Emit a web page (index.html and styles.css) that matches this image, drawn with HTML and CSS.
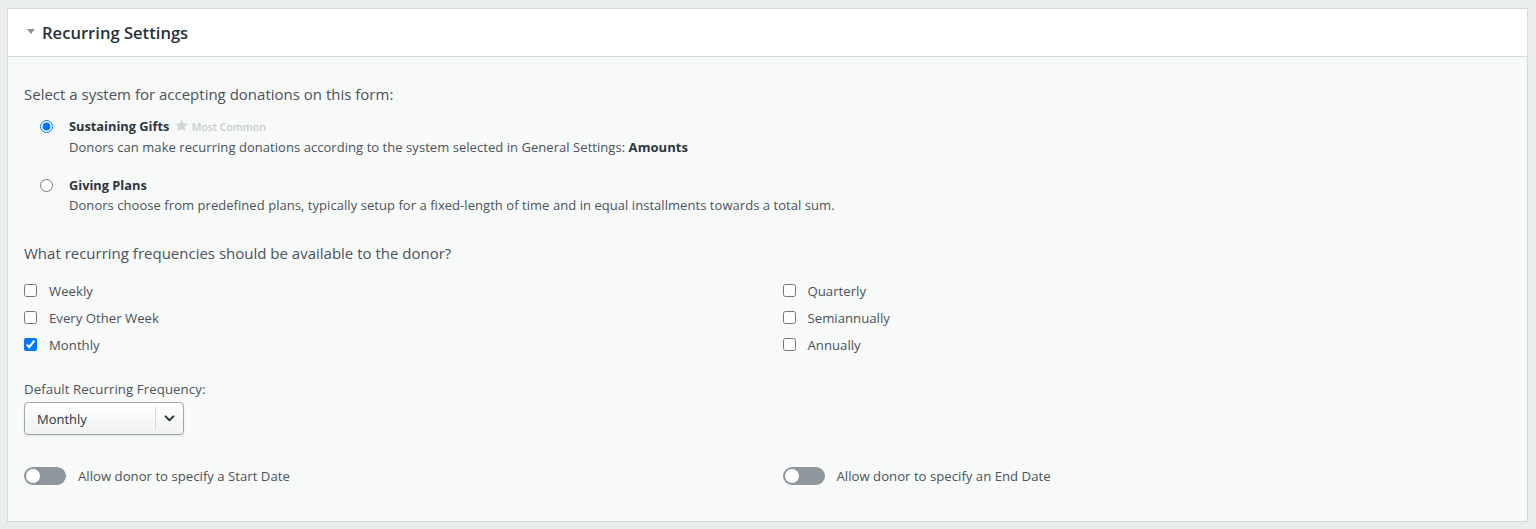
FILE: index.html
```html
<!DOCTYPE html>
<html>
<head>
<meta charset="utf-8">
<link rel="stylesheet" href="styles.css">
</head>
<body>
<div class="panel">
  <div class="panel-head">
    <span class="caret"></span>
    <h2 class="panel-title">Recurring Settings</h2>
  </div>
  <div class="panel-body">
    <p class="question">Select a system for accepting donations on this form:</p>
    <div class="options">
      <label class="option">
        <input type="radio" name="sys" checked>
        <span class="option-text">
          <span class="option-title">Sustaining Gifts <span class="badge"><svg class="star" viewBox="0 0 24 24" width="15" height="15"><path d="M12 1.8l3.1 6.6 7.2.8-5.4 4.9 1.5 7.1L12 17.6l-6.4 3.6 1.5-7.1L1.7 9.2l7.2-.8z" fill="#d3d6d9"/></svg>Most Common</span></span>
          <span class="option-desc">Donors can make recurring donations according to the system selected in General Settings: <b>Amounts</b></span>
        </span>
      </label>
      <label class="option">
        <input type="radio" name="sys">
        <span class="option-text">
          <span class="option-title">Giving Plans</span>
          <span class="option-desc">Donors choose from predefined plans, typically setup for a fixed-length of time and in equal installments towards a total sum.</span>
        </span>
      </label>
    </div>
    <p class="question q2">What recurring frequencies should be available to the donor?</p>
    <div class="cols">
      <div class="checks">
        <label class="check"><input type="checkbox"><span>Weekly</span></label>
        <label class="check"><input type="checkbox"><span>Every Other Week</span></label>
        <label class="check"><input type="checkbox" checked><span>Monthly</span></label>
      </div>
      <div class="checks">
        <label class="check"><input type="checkbox"><span>Quarterly</span></label>
        <label class="check"><input type="checkbox"><span>Semiannually</span></label>
        <label class="check"><input type="checkbox"><span>Annually</span></label>
      </div>
    </div>
    <div class="field">
      <div class="field-label">Default Recurring Frequency:</div>
      <div class="select">
        <span class="select-value">Monthly</span>
        <span class="select-arrow"><svg viewBox="0 0 12 8" width="11" height="7"><path d="M1.5 1.5l4.5 4.5 4.5-4.5" fill="none" stroke="#2b343b" stroke-width="2.2" stroke-linecap="round" stroke-linejoin="round"/></svg></span>
      </div>
    </div>
    <div class="cols toggles">
      <div class="toggle-row"><span class="toggle"><span class="knob"></span></span><span>Allow donor to specify a Start Date</span></div>
      <div class="toggle-row"><span class="toggle"><span class="knob"></span></span><span>Allow donor to specify an End Date</span></div>
    </div>
  </div>
</div>
</body>
</html>
```
FILE: styles.css
```css
* { box-sizing: border-box; }
html, body { margin: 0; }
body {
  background: #e9edee;
  padding: 8px 8px 7px 7px;
  font-family: "Open Sans", "Liberation Sans", sans-serif;
  color: #4a535b;
}
.panel {
  border: 1px solid #d3d9dc;
  background: #f8f9f9;
  height: 514px;
}
.panel-head {
  height: 48px;
  background: #fff;
  border-bottom: 1px solid #d3d9dc;
  display: flex;
  align-items: center;
  padding-left: 19px;
}
.caret {
  width: 0; height: 0;
  border-left: 4.5px solid transparent;
  border-right: 4.5px solid transparent;
  border-top: 5px solid #8b9196;
  margin-right: 7px;
  margin-top: -2px;
}
.panel-title {
  margin: 0;
  font-size: 16.6px;
  font-weight: 600;
  color: #27323a;
}
.panel-body {
  padding: 27px 16px 0 16px;
}
.question {
  margin: 0;
  font-size: 15px;
  line-height: 20px;
  color: #4a535b;
}
.options {
  padding: 12px 0 0 16px;
  display: flex;
  flex-direction: column;
  gap: 18px;
}
.option {
  display: flex;
  align-items: flex-start;
}
.option input {
  margin: 4px 16px 0 0;
  width: 13px; height: 13px;
}
.option-text { display: flex; flex-direction: column; }
.option-title {
  font-size: 12.8px;
  font-weight: 700;
  color: #2c363e;
  line-height: 20px;
}
.option-desc {
  font-size: 13px;
  line-height: 20px;
  color: #4a535b;
  letter-spacing: 0.05px;
}
.option-desc b { color: #2c363e; }
.badge {
  font-size: 10.5px;
  font-weight: 600;
  color: #c8ccd0;
  margin-left: 1px;
}
.star {
  vertical-align: -2px;
  margin-right: 3px;
}
.q2 { margin-top: 28px; }
.cols {
  display: grid;
  grid-template-columns: 1fr 1fr;
  column-gap: 30px;
}
.checks {
  padding-top: 18px;
  display: flex;
  flex-direction: column;
  gap: 7px;
}
.check {
  display: flex;
  align-items: center;
  font-size: 13.2px;
  line-height: 20px;
  color: #4a535b;
}
.check input {
  margin: -2px 12px 0 0;
  width: 13px; height: 13px;
}
.field { padding-top: 25px; }
.field-label {
  font-size: 13.2px;
  line-height: 18px;
  color: #4a535b;
  letter-spacing: 0.1px;
}
.select {
  margin-top: 4px;
  width: 160px;
  height: 33px;
  border: 1px solid #9ea5ab;
  border-radius: 4px;
  background: linear-gradient(#ffffff, #eff1f2);
  box-shadow: 0 1px 2px rgba(0,0,0,0.12);
  display: flex;
  align-items: center;
}
.select-value {
  flex: 1;
  padding-left: 12px;
  font-size: 13px;
  color: #2c363e;
}
.select-arrow {
  width: 28px;
  height: 23px;
  border-left: 1px solid #d5d9dc;
  display: flex;
  align-items: center;
  justify-content: center;
}
.toggles { padding-top: 32px; }
.toggle-row {
  display: flex;
  align-items: center;
  font-size: 13.2px;
  color: #4a535b;
  gap: 12px;
}
.toggle {
  width: 42px;
  height: 18px;
  border-radius: 9px;
  background: #8e979d;
  display: flex;
  align-items: center;
  padding-left: 2px;
}
.knob {
  width: 14px; height: 14px;
  border-radius: 50%;
  background: #fff;
}
```
